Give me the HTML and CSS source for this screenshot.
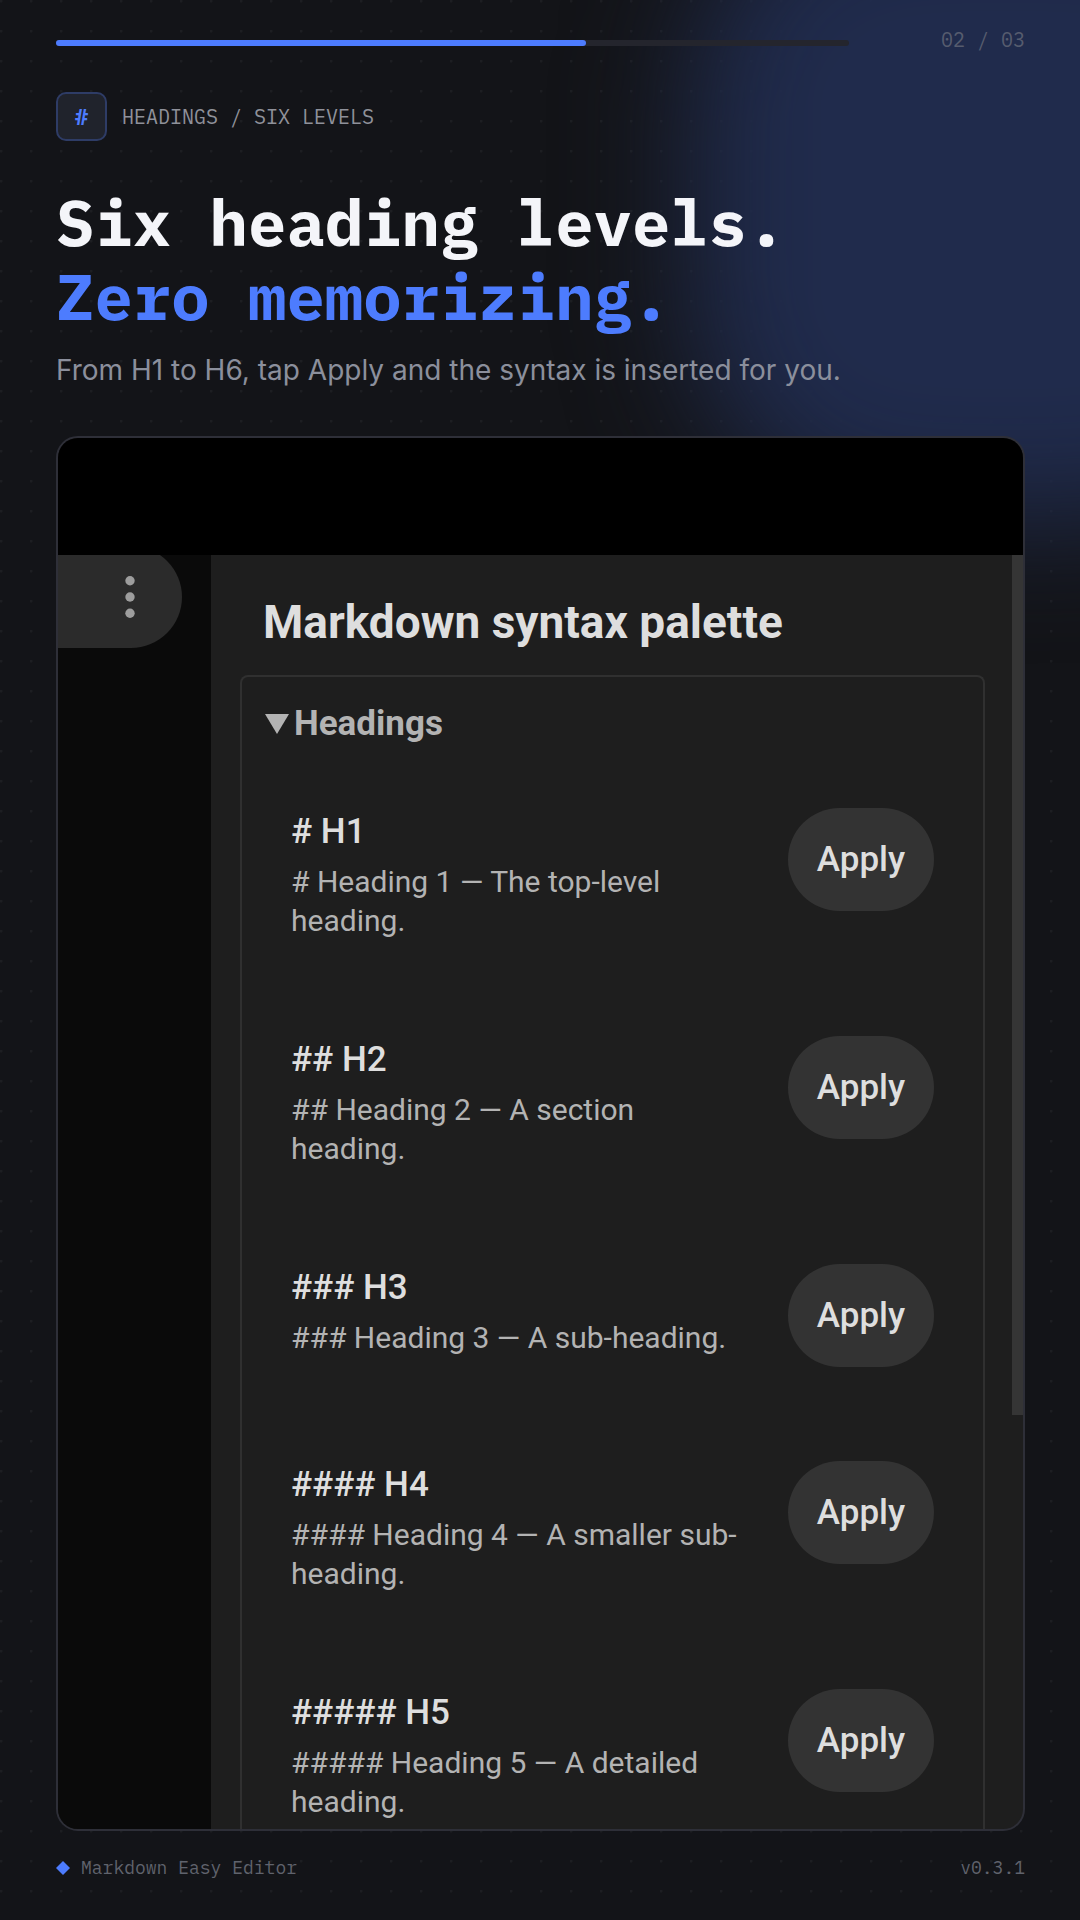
FILE: index.html
```html
<!DOCTYPE html>
<html lang="en">
<head>
<meta charset="utf-8">
<meta name="viewport" content="width=device-width, initial-scale=1">
<title>Markdown Easy Editor</title>
<link rel="stylesheet" href="styles.css">
</head>
<body>
<div class="slide">
  <header class="topbar">
    <div class="progress" role="progressbar" aria-label="Slide 2 of 3" aria-valuemin="0" aria-valuemax="3" aria-valuenow="2">
      <div class="progress-fill" style="width: 66.8%"></div>
    </div>
    <span class="counter">02 / 03</span>
  </header>

  <div class="eyebrow">
    <span class="badge">#</span>
    <span>HEADINGS / SIX LEVELS</span>
  </div>

  <h1 class="title">Six heading levels.<br><span class="accent">Zero memorizing.</span></h1>
  <p class="subtitle">From H1 to H6, tap Apply and the syntax is inserted for you.</p>

  <main class="screen">
    <div class="statusbar"></div>
    <div class="app">
      <div class="backdrop">
        <button class="menu" type="button" aria-label="More options">
          <svg width="10" height="43" viewBox="0 0 10 43" fill="#9d9d9d" aria-hidden="true">
            <circle cx="5" cy="4.7" r="4.7"/><circle cx="5" cy="21" r="4.7"/><circle cx="5" cy="37.3" r="4.7"/>
          </svg>
        </button>
      </div>
      <section class="palette">
        <h2 class="palette-title">Markdown syntax palette</h2>
        <details class="group" open>
          <summary class="group-title">
            <svg width="24" height="20" viewBox="0 0 24 20" fill="#b3b3b3" aria-hidden="true"><path d="M0 0h24L12 20z"/></svg>
            Headings
          </summary>
          <ul class="rows">
            <li class="row">
              <div class="text"><h3 class="name"># H1</h3><p class="desc"># Heading 1 — The top-level heading.</p></div>
              <button class="apply" type="button">Apply</button>
            </li>
            <li class="row">
              <div class="text"><h3 class="name">## H2</h3><p class="desc">## Heading 2 — A section heading.</p></div>
              <button class="apply" type="button">Apply</button>
            </li>
            <li class="row">
              <div class="text"><h3 class="name">### H3</h3><p class="desc">### Heading 3 — A sub-heading.</p></div>
              <button class="apply" type="button">Apply</button>
            </li>
            <li class="row">
              <div class="text"><h3 class="name">#### H4</h3><p class="desc">#### Heading 4 — A smaller sub-heading.</p></div>
              <button class="apply" type="button">Apply</button>
            </li>
            <li class="row">
              <div class="text"><h3 class="name">##### H5</h3><p class="desc">##### Heading 5 — A detailed heading.</p></div>
              <button class="apply" type="button">Apply</button>
            </li>
          </ul>
        </details>
        <div class="scrollbar"></div>
      </section>
    </div>
  </main>

  <footer class="footer">
    <span class="brand">
      <svg width="14" height="14" viewBox="0 0 14 14" fill="#4d7cfe" aria-hidden="true"><path d="M7 0l7 7-7 7-7-7z"/></svg>
      Markdown Easy Editor
    </span>
    <span>v0.3.1</span>
  </footer>
</div>
</body>
</html>
```
FILE: styles.css
```css
* { box-sizing: border-box; margin: 0; padding: 0; }

body {
  background: #131418;
  font-family: Roboto, sans-serif;
}

.slide {
  position: relative;
  isolation: isolate;
  overflow: hidden;
  min-height: 100vh;
  display: flex;
  flex-direction: column;
  padding: 27px 55px 40px 56px;
  background:
    radial-gradient(circle at 1px 1px, #1d1e22 1px, transparent 2px) 0 0 / 30px 30px,
    #131418;
}

/* soft blue glow behind the top right corner */
.slide::before {
  content: "";
  position: absolute;
  z-index: -1;
  top: -120px;
  right: -240px;
  width: 630px;
  height: 640px;
  border-radius: 220px;
  background: #202b4c;
  filter: blur(60px);
}

.topbar {
  display: flex;
  align-items: flex-start;
  justify-content: space-between;
}

.progress {
  flex: 1;
  height: 6px;
  margin-top: 13px;
  border-radius: 3px;
  background: #24252d;
}

.progress-fill {
  height: 100%;
  border-radius: 3px;
  background: #4d7cfe;
}

.counter {
  width: 176px;
  text-align: right;
  font: 20px/26px "IBM Plex Mono", "Liberation Mono", monospace;
  color: #565c6e;
}

.eyebrow {
  display: flex;
  align-items: center;
  gap: 15px;
  margin-top: 39px;
  font: 20px/26px "IBM Plex Mono", "Liberation Mono", monospace;
  color: #8f919a;
}

.badge {
  width: 51px;
  height: 49px;
  display: flex;
  align-items: center;
  justify-content: center;
  border: 2px solid #2e3c66;
  border-radius: 10px;
  background: #20232c;
  color: #4d7cfe;
  font-size: 22px;
  font-weight: 600;
}

.title {
  margin-top: 44px;
  font: 700 64px/74px "IBM Plex Mono", "Liberation Mono", monospace;
  color: #f4f5f9;
}

.accent { color: #4d7cfe; }

.subtitle {
  margin-top: 17px;
  font: 28px/40px Inter, sans-serif;
  color: #8b8f9c;
}

.screen {
  flex: 1;
  display: flex;
  flex-direction: column;
  margin-top: 46px;
  border: 2px solid #2e2f38;
  border-radius: 22px;
  background: #1e1e1e;
  overflow: hidden;
}

.statusbar {
  height: 117px;
  background: #000;
}

.app {
  flex: 1;
  display: flex;
  overflow: hidden;
}

.backdrop {
  width: 153px;
  background: #0a0a0a;
}

.menu {
  display: flex;
  align-items: center;
  justify-content: flex-end;
  width: 124px;
  height: 102px;
  margin-top: -9px;
  padding-right: 47px;
  border: 0;
  border-radius: 0 51px 51px 0;
  background: #2b2b2b;
}

.palette {
  position: relative;
  flex: 1;
  display: flex;
  flex-direction: column;
  padding: 40px 38px 0 29px;
}

.palette-title {
  padding-left: 23px;
  font-size: 46px;
  line-height: 54px;
  color: #dedede;
}

.group {
  flex: 1;
  margin-top: 26px;
  border: 2px solid #303030;
  border-bottom: 0;
  border-radius: 8px 8px 0 0;
}

.group-title {
  display: flex;
  align-items: center;
  gap: 5px;
  padding: 26px 23px 0;
  list-style: none;
  font-size: 35px;
  font-weight: 700;
  line-height: 41px;
  color: #b3b3b3;
}

.rows {
  display: flex;
  flex-direction: column;
  gap: 94px;
  padding: 64px 49px 6px 49px;
  list-style: none;
}

.row {
  display: flex;
  align-items: flex-start;
  gap: 40px;
}

.text {
  flex: 1;
  padding-bottom: 2px;
}

.name {
  font-size: 35px;
  font-weight: 500;
  line-height: 48px;
  color: #dedede;
}

.desc {
  margin-top: 6px;
  font-size: 30px;
  line-height: 39px;
  color: #b3b3b3;
}

.apply {
  width: 146px;
  height: 103px;
  border: 0;
  border-radius: 52px;
  background: #333;
  font: 500 35px/41px Roboto, sans-serif;
  color: #dedede;
}

.scrollbar {
  position: absolute;
  top: 0;
  right: 0;
  width: 11px;
  height: 67.5%;
  background: #353535;
}

.footer {
  display: flex;
  justify-content: space-between;
  margin-top: 25px;
  font: 18px/24px "IBM Plex Mono", "Liberation Mono", monospace;
  color: #60636d;
}

.brand {
  display: flex;
  align-items: center;
  gap: 11px;
}
```
